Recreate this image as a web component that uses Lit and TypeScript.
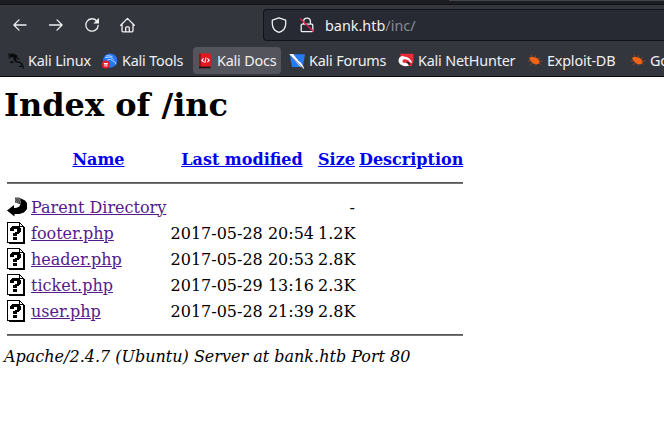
import { LitElement, html, css, svg } from "lit";
import { customElement } from "lit/decorators.js";
import { classMap } from "lit/directives/class-map.js";
import { styleMap } from "lit/directives/style-map.js";

const icons = {
  back: svg`<path class="line" d="M14 8H2.2M7 2.9 1.9 8 7 13.1"/>`,
  forward: svg`<path class="line" d="M1.5 8h12.3M9 2.9 14.1 8 9 13.1"/>`,
  reload: svg`<path class="line" d="M12.8 4A6.2 6.2 0 1 0 14.2 8.4"/><path class="solid" d="M15 .8v5.7H9.3z"/>`,
  home: svg`<path class="line" d="M.7 8.3 7.5 1.4l6.8 6.9M2 7.3v6.5q0 1 1 1h9q1 0 1-1V7.3M5.7 14.8v-4q0-1 1-1h1.6q1 0 1 1v4"/>`,
  shield: svg`<path class="line" d="M8 .9 14.7 3.2v3.5C14.7 11 12 14 8 15.3 4 14 1.3 11 1.3 6.700V3.200z"/>`,
  lock: svg`<path class="line" d="M4.600 7.200V4.500a3.400 3.400 0 0 1 6.800 0v2.700M3.200 7.200h9.600q1 0 1 1v5.500q0 1-1 1H3.200q-1 0-1-1V8.200q0-1 1-1z"/><path d="M1 1.600 14.800 14.800" fill="none" stroke="#e0214f" stroke-width="1.400"/>`,
};

const dragon = svg`<path d="M0 1.1 5.8.8 9.2 2.8 8.6 4.2 11.7 6.4 10.3 6.1 8.4 5.2C6.9 6 8 8 9.8 8.5c2.6.5 4.7 1.5 5.5 4.6l.2 2.8-1.2-3.4c-1-2.1-2.8-2.6-4.8-3C6.5 9 5.2 7.2 6 4.6L3.8 3.8.5 5.5 2.6 3.2 0 3.1 3.4 2z"/><path d="M5.3 8.6 2 9.2 5.8 9.8M14 12.7l-3.1.9 3.5-.1" fill="none" stroke="#08090b" stroke-width=".9"/>`;
const bug = svg`<g fill="#f16416"><path d="M2 4.7 5.2 3.8 10 5l2.4 2.7-.1 2.6-2.4 1.2-3.8-.9L3.4 7.7z"/><path d="M5 4 4.1 1.7M8 5l.5-2.5M11 6.2l2-1.7M13 8.3l2.4-.3M12.2 10.3l1.8 1.2M4 7.7.9 8M5.7 9.8 3 12M8 11.4l.1 1.6" fill="none" stroke="#ac481c" stroke-width=".8"/></g>`;

const bookmarks = [
  { label: "Kali Linux", width: 62, icon: svg`<g fill="#08090b" stroke="#08090b" stroke-width=".4">${dragon}</g>` },
  { label: "Kali Tools", width: 63, icon: svg`<circle cx="8.2" cy="7.6" r="7.1" fill="#2777f4"/><path d="M3 4.6 8 4l3.5 2.3M5 7.2q4-2 5.5.7 3 .2 3.5 3.5M4 3q4-1 6.5.8" fill="none" stroke="#b8d6ff" stroke-width="1"/><circle cx="3.8" cy="11.6" r="4" fill="#ed1c24"/><path d="M1.8 10.5h4M3 10.5v3M4.8 10.5v3" fill="none" stroke="#fff"/>` },
  { label: "Kali Docs", width: 60, active: true, icon: svg`<path d="M2 .4h11.8v14.8H2z" fill="#e11820"/><path d="M2 .4h2v14.8H2z" fill="#9d1018"/><path d="M2 13.6h11.8v1.7H2z" fill="#15171f"/><path d="M6.6 5.4 4.8 7.2l1.8 1.8M10.4 5.4l1.8 1.8L10.4 9M9 4.5 7.8 10" fill="none" stroke="#fff" stroke-width="1.1"/>` },
  { label: "Kali Forums", width: 77, icon: svg`<path d="M1 1.2h15L13.8 14H3L1.8 8z" fill="#247bf5"/><path d="M.2 1.1 4.1 1l5.8 7.2 1.8 1.4 3 4.4.2 2-4.8-3.4-2-2.4z" fill="#fff"/><path d="M1.8 3.2 14 15" fill="none" stroke="#56606e" stroke-width=".8"/>` },
  { label: "Kali NetHunter", width: 97, icon: svg`<path d="M2 .8h13.5v7.4L13.5 13H6z" fill="#ef2935"/><path d="M.5 8Q.7 3.6 4.2 3l5 1.2q4 2 5 5.8L12 9.2Q10.6 6.5 7.5 6.2 4.3 5.8 4.6 8.4q.8 2.3 3.8 1.2l3.1 2.6q-3.8 2-7 .3Q1 11 .5 8z" fill="#fff"/><path d="M8.4 9.6q2.5-.8 3.1 2.6" fill="none" stroke="#20232a" stroke-width="1.6"/>` },
  { label: "Exploit-DB", width: 71, icon: bug },
  { label: "Google Hacking DB", width: 130, icon: bug },
];

const files = [
  { name: "Parent Directory", date: "", size: "-", parent: true },
  { name: "footer.php", date: "2017-05-28 20:54", size: "1.2K" },
  { name: "header.php", date: "2017-05-28 20:53", size: "2.8K" },
  { name: "ticket.php", date: "2017-05-29 13:16", size: "2.3K" },
  { name: "user.php", date: "2017-05-28 21:39", size: "2.8K" },
];

const glyph = (body: unknown) => html`<svg class="glyph" viewBox="0 0 16 16">${body}</svg>`;

@customElement("browser-chrome")
class BrowserChrome extends LitElement {
  static styles = css`
    :host { display: block; height: 77px; box-sizing: border-box; background: #33363d; border-bottom: 1px solid #090a0d; color: #f0f0f2; font-family: "Noto Sans", sans-serif; font-size: 14.4px; }
    .tabs { height: 5px; background: linear-gradient(#1b1d22 0 4px, #111317 4px); display: flex; justify-content: flex-end; }
    .tab { width: 215px; height: 1px; background: #42444b; }
    .nav { display: flex; margin-top: 4px; height: 32px; }
    .buttons { width: 251px; padding-left: 12px; display: flex; align-items: center; gap: 20px; }
    .glyph { width: 16px; height: 16px; flex: none; display: block; overflow: visible; }
    .line { fill: none; stroke: #f0f0f2; stroke-width: 1.3; stroke-linecap: round; stroke-linejoin: round; }
    .solid { fill: #f0f0f2; }
    .address { flex: 1; box-sizing: border-box; border: 1px solid #111318; border-right: 0; border-radius: 4px 0 0 4px; background: #272933; display: flex; align-items: center; padding-left: 7px; gap: 12px; }
    .url { margin-left: -2px; white-space: pre; }
    .path { color: #898b93; }
    .bookmarks { display: flex; height: 27px; margin-top: 6px; padding-left: 4px; overflow: hidden; }
    .bookmark { display: flex; align-items: center; gap: 4px; padding: 0 4px; margin-right: 4px; border-radius: 4px; white-space: nowrap; flex: none; letter-spacing: -0.2px; }
    .active { background: #54555c; }
  `;

  render() {
    return html`
      <div class="tabs"><div class="tab"></div></div>
      <div class="nav">
        <div class="buttons">${[icons.back, icons.forward, icons.reload, icons.home].map(glyph)}</div>
        <div class="address">
          ${glyph(icons.shield)}${glyph(icons.lock)}
          <span class="url">bank.htb<span class="path">/inc/</span></span>
        </div>
      </div>
      <div class="bookmarks">
        ${bookmarks.map((b) => html`<div class=${classMap({ bookmark: true, active: !!b.active })}>${glyph(b.icon)}<span style=${styleMap({ width: `${b.width}px` })}>${b.label}</span></div>`)}
      </div>`;
  }
}

@customElement("app-root")
class AppRoot extends LitElement {
  static styles = css`
    :host { display: block; height: 432px; overflow: hidden; background: #fff; color: #000; font: 16px/19px "DejaVu Serif", serif; }
    main { padding-left: 4px; }
    h1 { margin: 0; padding-top: 9px; font-size: 32px; line-height: 38px; font-weight: bold; }
    .listing { width: 456px; margin: 23px 0 0 3px; }
    .row { display: grid; grid-template-columns: 20px 135px 144px 37px 104px; column-gap: 4px; height: 26px; align-items: center; }
    .head { height: 24px; font-weight: bold; text-align: center; }
    a { color: #551a8b; text-decoration: underline; white-space: nowrap; }
    .head a { color: #0000ee; }
    .date, .size { text-align: right; white-space: nowrap; }
    hr { height: 2px; margin: 0; border: 0; background: linear-gradient(#555 50%, #777 50%); }
    .head + hr { margin: 11px 0 10px; }
    .row:not(.head) + hr { margin-top: 10px; }
    .icon { width: 20px; height: 22px; display: block; }
    address { font-style: italic; margin-top: 11px; }
  `;

  fileIcon() {
    return html`<svg class="icon" viewBox="0 0 20 22" shape-rendering="crispEdges">
      <path d="M0 0h13v1h1v1h1v1h1v1h1v1h1v17H2v-1H0z"/>
      <path d="M1 1h11v4h4v15H1z" fill="#fff"/><path d="M13 2h1v1h1v1h-2z" fill="#fff"/>
      <path d="M5 4h7v1h1v1h1v4h-1v1h-1v1h-2v2H6v-3h2v-1h2V7H7v2H3V6h1V5h1zM6 15h4v3H6z"/>
    </svg>`;
  }

  backIcon() {
    return html`<svg class="icon" viewBox="0 0 20 22">
      <path d="M0 14.500 7 9v3c3.500 0 6-1 6.500-4.500L14 2.500l4 2L20 7v6l-3 3.500-4.500 1.500H7.500v2.500z"/>
      <path d="M8 1.500h4l2 1v6L8 6.500z" fill="#444"/>
      <path d="M9 2h1m1 0h1M8 4h1m1 0h1m1 0h1M9 6h1m1 0h1m1 0h1" stroke="#aaa"/>
    </svg>`;
  }

  render() {
    return html`
      <browser-chrome></browser-chrome>
      <main>
        <h1>Index of /inc</h1>
        <div class="listing">
          <div class="row head"><span></span><a>Name</a><a>Last modified</a><a>Size</a><a>Description</a></div>
          <hr>
          ${files.map((f) => html`<div class="row">${f.parent ? this.backIcon() : this.fileIcon()}<a>${f.name}</a><span class="date">${f.date}</span><span class="size">${f.size}</span></div>`)}
          <hr>
        </div>
        <address>Apache/2.4.7 (Ubuntu) Server at bank.htb Port 80</address>
      </main>`;
  }
}
